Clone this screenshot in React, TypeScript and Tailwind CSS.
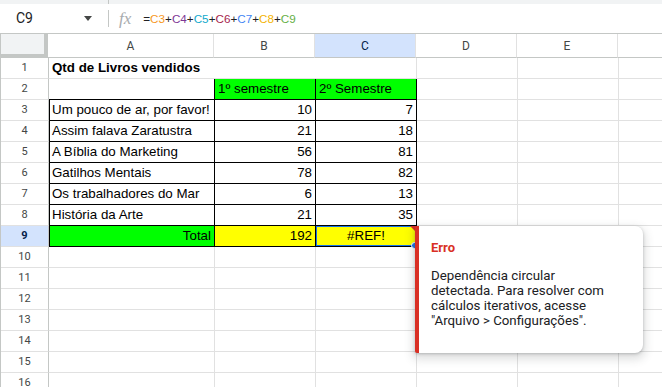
type Cell = {
  text?: string;
  bold?: boolean;
  align?: "left" | "right" | "center";
  bg?: string;
  right?: boolean; // black right border
  bottom?: boolean; // black bottom border
  left?: boolean; // black left border (first column only)
};

const COLS = [
  { key: "A", w: "w-[166px]" },
  { key: "B", w: "w-[101px]" },
  { key: "C", w: "w-[101px]" },
  { key: "D", w: "w-[101px]" },
  { key: "E", w: "w-[101px]" },
  { key: "F", w: "w-[101px]" },
];

const BOOKS: [string, number, number][] = [
  ["Um pouco de ar, por favor!", 10, 7],
  ["Assim falava Zaratustra", 21, 18],
  ["A Bíblia do Marketing", 56, 81],
  ["Gatilhos Mentais", 78, 82],
  ["Os trabalhadores do Mar", 6, 13],
  ["História da Arte", 21, 35],
];

const FORMULA: [string, string][] = [
  ["=", "text-[#202124]"],
  ["C3", "text-[#f7981d]"],
  ["+", "text-[#202124]"],
  ["C4", "text-[#7e3794]"],
  ["+", "text-[#202124]"],
  ["C5", "text-[#11a9cc]"],
  ["+", "text-[#202124]"],
  ["C6", "text-[#a61d4c]"],
  ["+", "text-[#202124]"],
  ["C7", "text-[#4285f4]"],
  ["+", "text-[#202124]"],
  ["C8", "text-[#f4b400]"],
  ["+", "text-[#202124]"],
  ["C9", "text-[#65b045]"],
];

function buildRows(): Cell[][] {
  const rows: Cell[][] = [];
  // row 2
  rows.push([
    { bottom: true, right: true },
    { text: "1º semestre", bg: "bg-[#00ff00]", right: true, bottom: true },
    { text: "2º Semestre", bg: "bg-[#00ff00]", right: true, bottom: true },
    {},
    {},
    {},
  ]);
  for (const [name, a, b] of BOOKS) {
    rows.push([
      { text: name, left: true, right: true, bottom: true },
      { text: String(a), align: "right", right: true, bottom: true },
      { text: String(b), align: "right", right: true, bottom: true },
      {},
      {},
      {},
    ]);
  }
  rows.push([
    { text: "Total", align: "right", bg: "bg-[#00ff00]", left: true, right: true, bottom: true },
    { text: "192", align: "right", bg: "bg-[#ffff00]", right: true, bottom: true },
    { text: "#REF!", align: "center", bg: "bg-[#ffff00]", right: true, bottom: true },
    {},
    {},
    {},
  ]);
  for (let i = 0; i < 7; i++) rows.push([{}, {}, {}, {}, {}, {}]);
  return rows;
}

function RowHeader({ n, active }: { n: number; active?: boolean }) {
  return (
    <div
      className={`w-[48px] shrink-0 h-full flex items-center justify-center border-r border-b border-r-[#c4c7c5] border-b-[#e1e1e1] text-[11px] font-['Roboto',sans-serif] ${
        active ? "bg-[#d3e3fd] font-bold text-[#041e49]" : "bg-white text-[#444746]"
      }`}
    >
      {n}
    </div>
  );
}

function GridCell({ cell, w, rowIdx, colIdx }: { cell: Cell; w: string; rowIdx: number; colIdx: number }) {
  const align =
    cell.align === "right" ? "justify-end" : cell.align === "center" ? "justify-center" : "justify-start";
  const selected = rowIdx === 9 && colIdx === 2;
  return (
    <div
      className={`${w} shrink-0 h-full relative flex items-center px-[3px] border-r border-b whitespace-nowrap overflow-hidden ${align} ${
        cell.bg ?? ""
      } ${cell.right ? "border-r-black" : "border-r-[#e1e1e1]"} ${
        cell.bottom ? "border-b-black" : "border-b-[#e1e1e1]"
      } ${cell.left ? "shadow-[inset_1px_0_0_#000]" : ""}`}
    >
      <span className={cell.bold ? "font-bold" : ""}>{cell.text}</span>
      {selected && (
        <>
          <div className="absolute -left-[1px] -top-[1px] -right-[1px] -bottom-[1px] border-2 border-[#1a73e8]" />
          <div className="absolute right-0 top-0 w-0 h-0 border-t-[6px] border-l-[6px] border-t-[#d93025] border-l-transparent" />
        </>
      )}
    </div>
  );
}

export default function App() {
  const rows = buildRows();
  return (
    <div className="w-[662px] h-[387px] overflow-hidden bg-white relative font-['Liberation_Sans',Arial,sans-serif] text-[13.33px] text-black">
      {/* top strip */}
      <div className="h-[4px] bg-[#f1f3f4] relative">
        <div className="absolute left-[108px] top-0 w-px h-full bg-[#c4c7c5]" />
      </div>

      {/* formula bar */}
      <div className="h-[30px] flex items-center border-b border-[#c4c7c5] font-['Roboto',sans-serif]">
        <div className="w-[100px] flex items-center pl-[16px] pr-[6px]">
          <span className="text-[14px] text-[#202124] flex-1">C9</span>
          <svg width="8" height="5" viewBox="0 0 8 5" className="mr-[2px]">
            <path d="M0 0h8L4 5z" fill="#444746" />
          </svg>
        </div>
        <div className="w-px h-[17px] bg-[#c4c7c5] ml-[8px]" />
        <span className="ml-[10px] italic text-[17px] leading-none text-[#a8abae] font-['Liberation_Serif',serif]">
          fx
        </span>
        <div className="ml-[12px] text-[11.7px] font-['Liberation_Sans',Arial,sans-serif]">
          {FORMULA.map(([t, c], i) => (
            <span key={i} className={c}>
              {t}
            </span>
          ))}
        </div>
      </div>

      {/* column header */}
      <div className="flex h-[24px] border-l border-[#c4c7c5]">
        <div className="w-[47px] shrink-0 h-full bg-[#f1f3f4] border-r-4 border-b-4 border-[#c4c7c5]" />
        {COLS.map((c) => (
          <div
            key={c.key}
            className={`${c.w} shrink-0 h-full flex items-center justify-center border-r border-b border-r-[#e1e1e1] border-b-[#c4c7c5] text-[12px] font-['Roboto',sans-serif] ${
              c.key === "C" ? "bg-[#d3e3fd] text-[#041e49]" : "bg-white text-[#444746]"
            }`}
          >
            {c.key === "F" ? "" : c.key}
          </div>
        ))}
      </div>

      {/* row 1 (A1:C1 merged) */}
      <div className="flex h-[21px] border-l border-[#c4c7c5]">
        <RowHeader n={1} />
        <div className="w-[368px] shrink-0 h-full flex items-center px-[3px] font-bold border-r border-b border-r-[#e1e1e1] border-b-[#e1e1e1]">
          Qtd de Livros vendidos
        </div>
        {COLS.slice(3).map((c) => (
          <div key={c.key} className={`${c.w} shrink-0 h-full border-r border-b border-[#e1e1e1]`} />
        ))}
      </div>

      {rows.map((row, r) => (
        <div key={r} className="flex h-[21px] border-l border-[#c4c7c5]">
          <RowHeader n={r + 2} active={r + 2 === 9} />
          {row.map((cell, c) => (
            <GridCell key={c} cell={cell} w={COLS[c].w} rowIdx={r + 2} colIdx={c} />
          ))}
        </div>
      ))}

      {/* fill handle */}
      <div className="absolute left-[411px] top-[242px] w-[7px] h-[7px] rounded-full bg-[#1a73e8] border border-white" />

      {/* error tooltip */}
      <div className="absolute left-[415px] top-[226px] w-[228px] h-[127px] bg-white border-l-4 border-[#d93025] rounded-r-[8px] rounded-bl-[2px] shadow-[0_1px_3px_rgba(60,64,67,0.3),0_4px_8px_3px_rgba(60,64,67,0.15)] pl-[12px] pr-[12px] pt-[14px] font-['Roboto',sans-serif]">
        <div className="text-[13px] font-bold text-[#d93025] leading-[16px]">Erro</div>
        <div className="mt-[12px] text-[13.3px] leading-[15px] text-[#202124] whitespace-nowrap">
          Dependência circular
          <br />
          detectada. Para resolver com
          <br />
          cálculos iterativos, acesse
          <br />
          "Arquivo &gt; Configurações".
        </div>
      </div>
    </div>
  );
}
